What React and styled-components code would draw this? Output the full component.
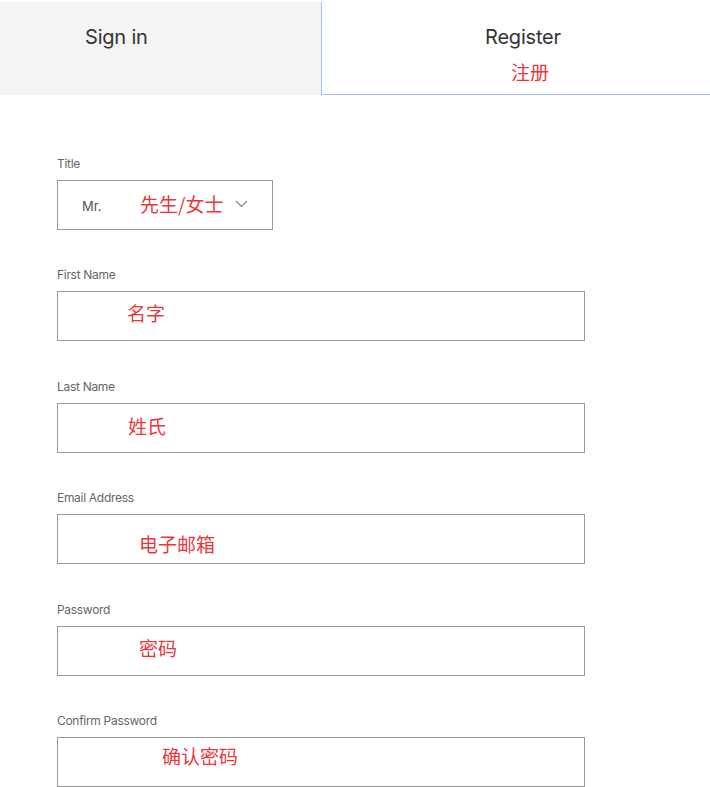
import React from 'react';
import styled, { createGlobalStyle } from 'styled-components';

const GlobalStyle = createGlobalStyle`
    body {
        margin: 0;
        background: #fff;
        font-family: Inter, "Liberation Sans", "Noto Sans CJK SC", sans-serif;
    }
`;

const fields = [
    { label: 'First Name', note: '名字', indent: 69, top: 8 },
    { label: 'Last Name', note: '姓氏', indent: 70, top: 9 },
    { label: 'Email Address', note: '电子邮箱', indent: 81, top: 16 },
    { label: 'Password', note: '密码', indent: 81, top: 8 },
    { label: 'Confirm Password', note: '确认密码', indent: 104, top: 5 },
];

function App() {
    return (
        <Page>
            <GlobalStyle />
            <Tabs>
                <Tab>
                    <TabText>Sign in</TabText>
                </Tab>
                <ActiveTab>
                    <TabText>Register</TabText>
                    <Note $tab>注册</Note>
                </ActiveTab>
            </Tabs>
            <Form>
                <Field>
                    <Label>Title</Label>
                    <Select>
                        <SelectValue>Mr.</SelectValue>
                        <Note>先生/女士</Note>
                        <svg width="13" height="8" viewBox="0 0 13 8" style={{ marginLeft: 12 }}>
                            <polyline points="1,1 6.5,6.5 12,1" fill="none" stroke="#8a8079" strokeWidth="1.1" />
                        </svg>
                    </Select>
                </Field>
                {fields.map((f) => (
                    <Field key={f.label}>
                        <Label>{f.label}</Label>
                        <Input $indent={f.indent} $top={f.top}>
                            <Note>{f.note}</Note>
                        </Input>
                    </Field>
                ))}
            </Form>
        </Page>
    );
}

export default App;

const Page = styled.div`
    width: 710px;
    min-height: 787px;
    padding-top: 2px;
`;

const Tabs = styled.div`
    display: flex;
    height: 93px;
`;

const Tab = styled.div`
    width: 321px;
    background: #f4f4f4;
    padding: 22px 0 0 85px;
    box-sizing: border-box;
`;

const ActiveTab = styled.div`
    flex: 1;
    border-left: 1px solid #a8c2ee;
    border-bottom: 1px solid #a8c2ee;
    padding: 22px 0 0 163px;
    display: flex;
    flex-direction: column;
`;

const TabText = styled.div`
    font-size: 20px;
    line-height: 26px;
    color: #333;
    letter-spacing: -0.2px;
`;

const Note = styled.span`
    font-family: "Noto Sans CJK SC", sans-serif;
    font-size: 19px;
    line-height: 26px;
    color: #e8383d;
    margin: ${(p) => (p.$tab ? '9px 0 0 26px' : '0')};
`;

const Form = styled.div`
    padding: 61px 0 0 57px;
    display: flex;
    flex-direction: column;
    gap: 37.4px;
`;

const Field = styled.div`
    display: flex;
    flex-direction: column;
    gap: 8px;
`;

const Label = styled.div`
    font-size: 12px;
    line-height: 16px;
    color: #666;
    letter-spacing: -0.3px;
`;

const Select = styled.div`
    width: 216px;
    height: 50px;
    box-sizing: border-box;
    border: 1px solid #9a9a9a;
    display: flex;
    align-items: center;
    padding: 0 0 2px 24px;
`;

const SelectValue = styled.span`
    font-size: 13px;
    color: #555;
    width: 58px;
    margin-top: 4px;
`;

const Input = styled.div`
    width: 528px;
    height: 50px;
    box-sizing: border-box;
    border: 1px solid #9a9a9a;
    padding: ${(p) => p.$top}px 0 0 ${(p) => p.$indent}px;
`;
